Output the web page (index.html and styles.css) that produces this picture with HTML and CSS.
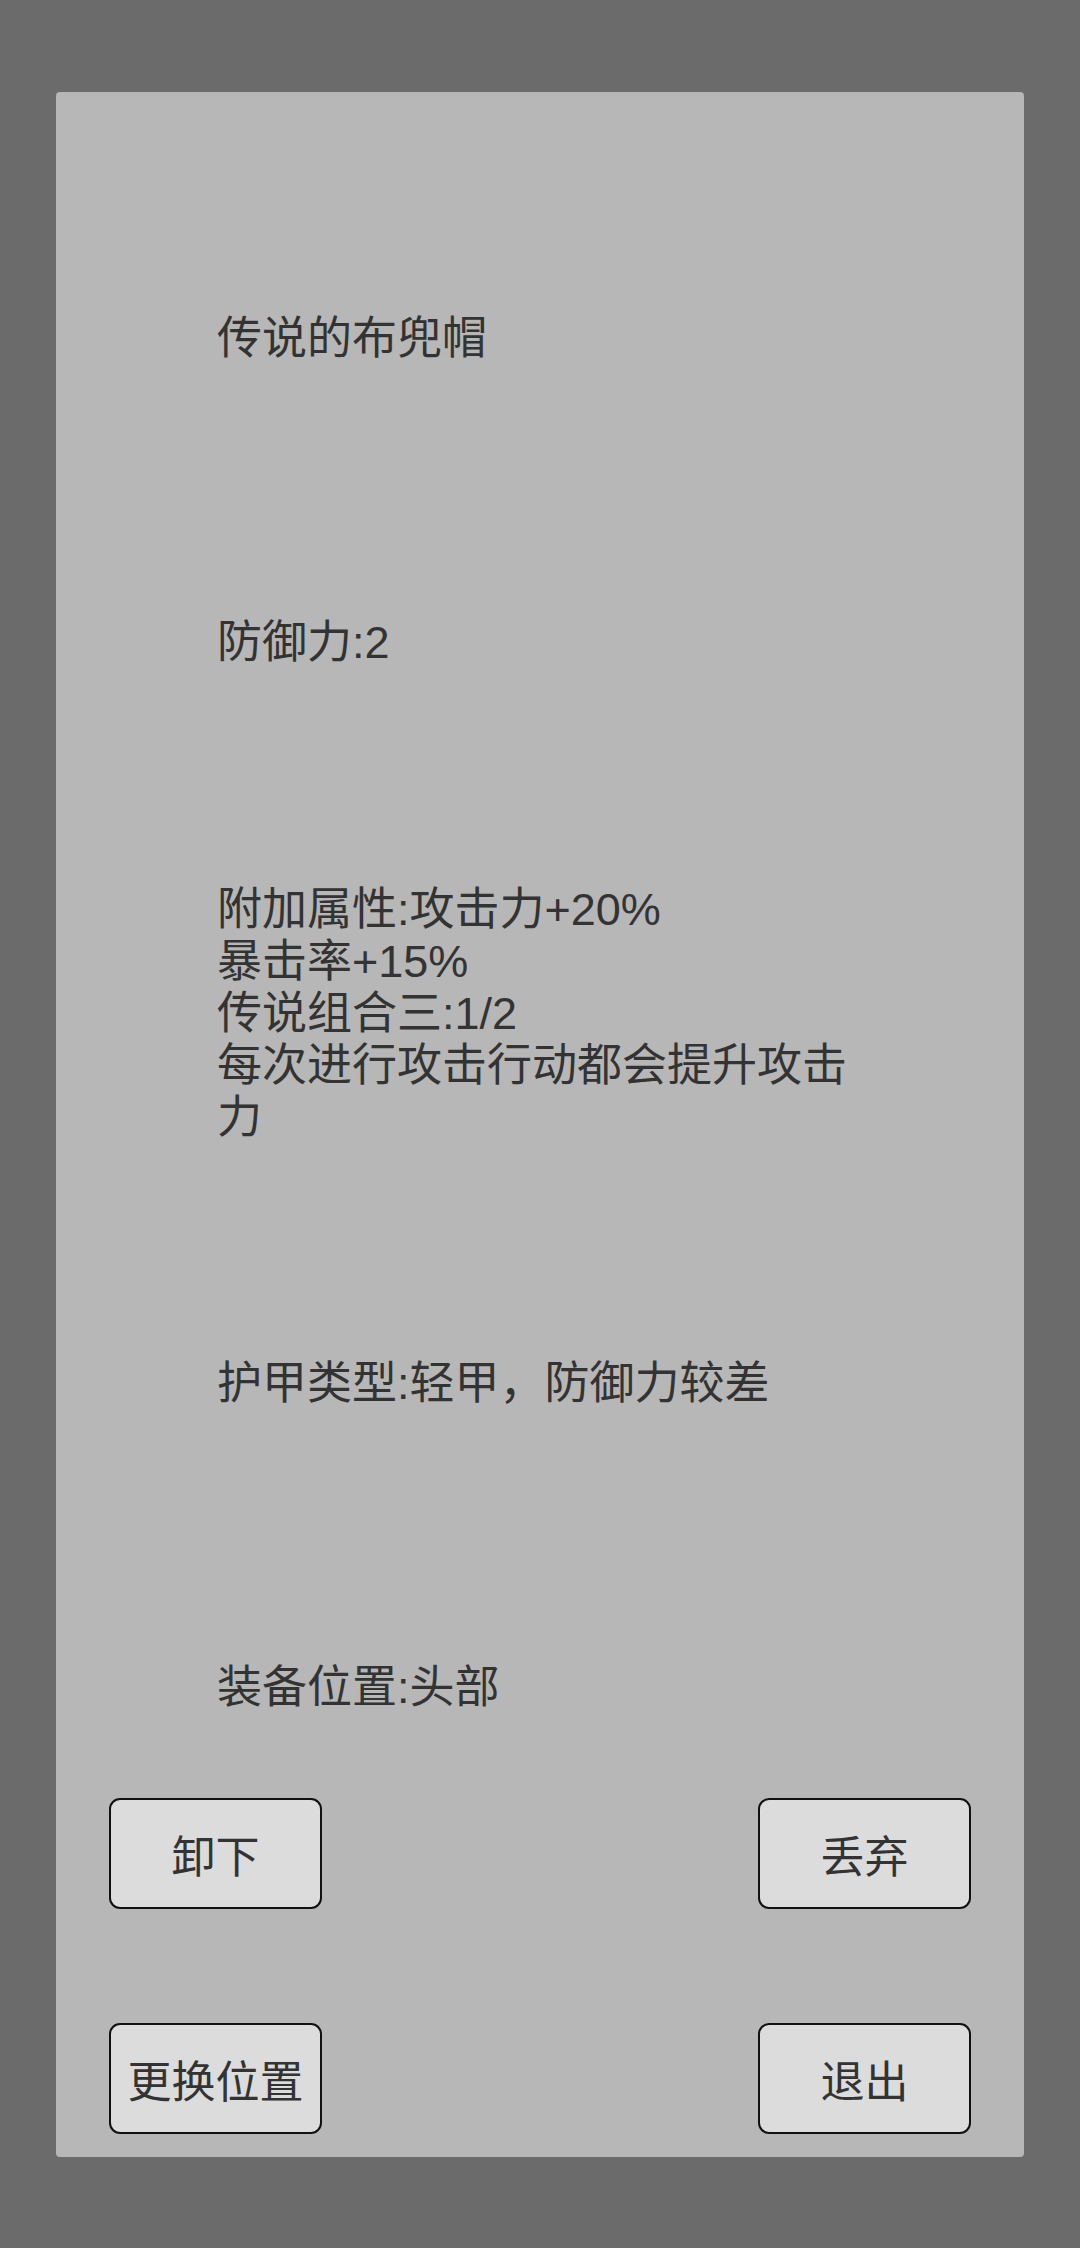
FILE: index.html
```html
<!DOCTYPE html>
<html lang="zh-CN">
<head>
    <meta charset="UTF-8">
    <meta name="viewport" content="width=device-width, initial-scale=1.0">
    <title>装备详情</title>
    <link rel="stylesheet" href="styles.css">
</head>
<body>
    <div class="panel">
        <!-- Item info -->
        <div class="info">
            <div class="info-name">传说的布兜帽</div>
            <div class="info-stat">防御力:2</div>
            <div class="info-extra">附加属性:攻击力+20%<br>暴击率+15%<br>传说组合三:1/2<br>每次进行攻击行动都会提升攻击力</div>
            <div class="info-armor">护甲类型:轻甲，防御力较差</div>
            <div class="info-slot">装备位置:头部</div>
        </div>

        <!-- Actions -->
        <div class="actions">
            <button class="action-button">卸下</button>
            <button class="action-button">丢弃</button>
            <button class="action-button">更换位置</button>
            <button class="action-button">退出</button>
        </div>
    </div>
</body>
</html>
```

FILE: styles.css
```css
body {
    margin: 0;
    padding: 92px 56px 0;
    height: 2248px;
    box-sizing: border-box;
    background: #6b6b6b;
    font-family: 'Liberation Sans', 'Noto Sans CJK SC', sans-serif;
    color: #333333;
}

.panel {
    background: #b7b7b7;
    border-radius: 4px;
    padding: 221px 53px 23px;
    height: 2065px;
    box-sizing: border-box;
    display: flex;
    flex-direction: column;
}

/* Item info */
.info {
    display: flex;
    flex-direction: column;
    padding-left: 108px;
    width: 646px;
    font-size: 45px;
    line-height: 52px;
}

.info-stat {
    margin-top: 252px;
}

.info-extra {
    margin-top: 215px;
}

.info-armor {
    margin-top: 214px;
}

.info-slot {
    margin-top: 252px;
}

/* Actions */
.actions {
    display: grid;
    grid-template-columns: 213px 213px;
    justify-content: space-between;
    row-gap: 114px;
    margin-top: auto;
}

.action-button {
    height: 111px;
    background: #dcdcdc;
    border: 2px solid #111111;
    border-radius: 11px;
    font-family: inherit;
    font-size: 44px;
    color: #333333;
    padding: 0;
}
```
